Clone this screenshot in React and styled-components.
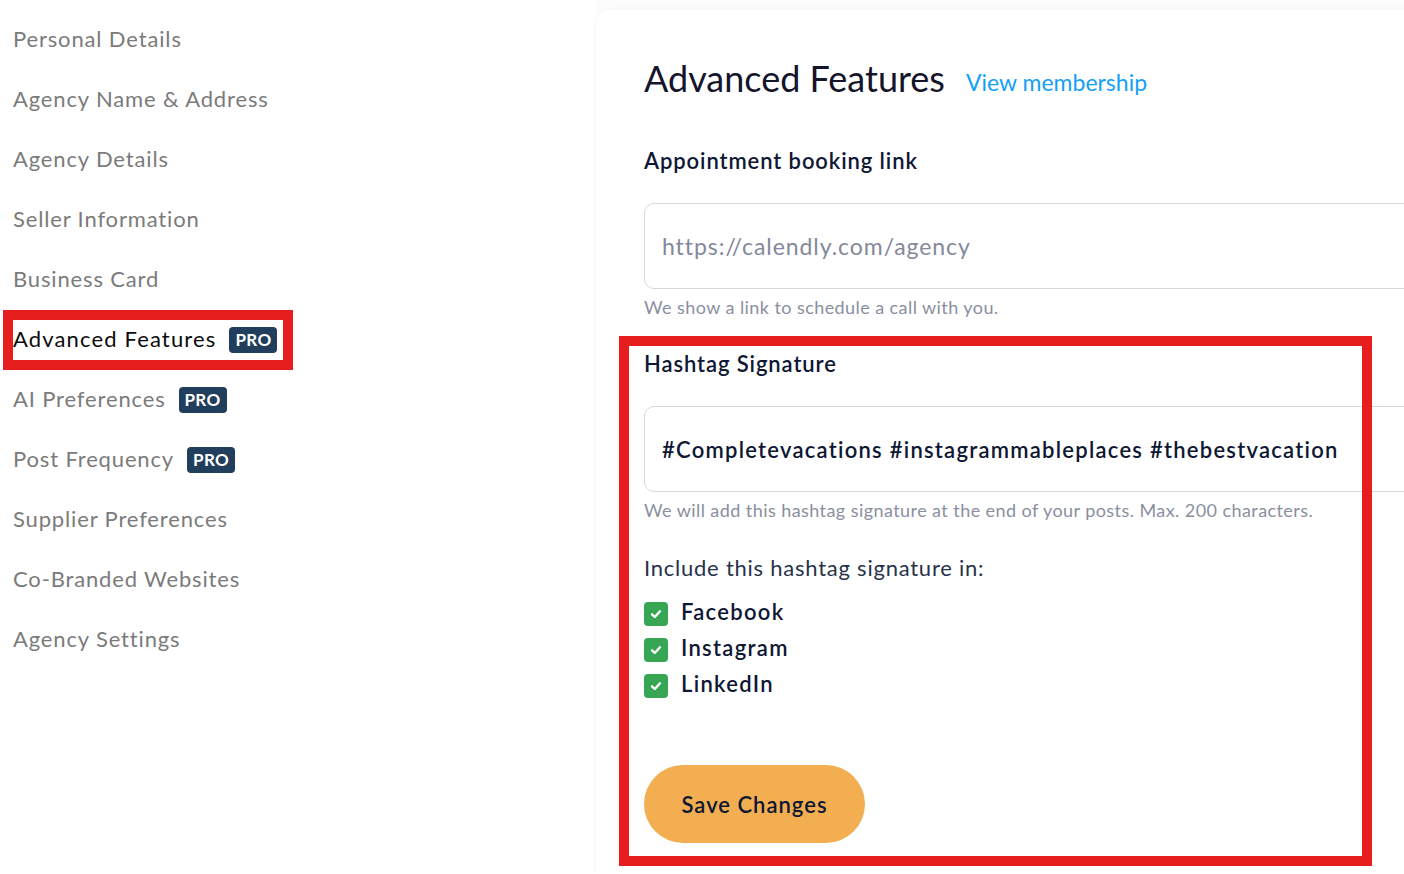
import React from "react";
import styled, { createGlobalStyle } from "styled-components";

const Global = createGlobalStyle`
  html, body { margin: 0; padding: 0; background: #ffffff; }
  body { font-family: "Lato", "Open Sans", sans-serif; overflow: hidden; }
  * { box-sizing: border-box; }
`;

const Page = styled.div`
  position: relative;
  display: flex;
  width: 1404px;
  height: 874px;
  overflow: hidden;
  background: #fcfcfc;
`;

const Sidebar = styled.nav`
  width: 596px;
  flex-shrink: 0;
  padding: 8px 0 0 13px;
  display: flex;
  flex-direction: column;
  background: #ffffff;
`;

const NavItem = styled.div`
  height: 60px;
  display: flex;
  align-items: center;
  gap: 13px;
  font-size: 22px;
  letter-spacing: ${(p) => (p.$active ? 1.15 : 0.85)}px;
  color: ${(p) => (p.$active ? "#0b0b0b" : "#7b7b7b")};
`;

const Badge = styled.span`
  display: inline-flex;
  align-items: center;
  justify-content: center;
  width: 48px;
  height: 26px;
  border-radius: 4px;
  background: #213f5c;
  color: #ffffff;
  font-size: 17px;
  font-weight: 700;
  letter-spacing: 0.3px;
  margin-top: 3px;
`;

const Card = styled.main`
  flex: 1;
  min-width: 860px;
  margin-top: 10px;
  background: #ffffff;
  border-radius: 14px 0 0 0;
  box-shadow: 0 0 6px rgba(0, 0, 0, 0.04);
  padding: 46px 0 0 49px;
  display: flex;
  flex-direction: column;
`;

const TitleRow = styled.div`
  display: flex;
  align-items: baseline;
  gap: 21px;
  height: 44px;
  margin-left: -1px;
  margin-bottom: 1px;
`;

const Title = styled.h1`
  margin: 0;
  font-size: 36px;
  font-weight: 400;
  line-height: 44px;
  color: #14142b;
`;

const Link = styled.a`
  font-size: 23px;
  color: #15a0f5;
  text-decoration: none;
  position: relative;
  top: -1px;
`;

const Label = styled.div`
  margin-top: ${(p) => p.$mt}px;
  margin-left: -1px;
  font-size: 22px;
  line-height: 28px;
  font-weight: ${(p) => (p.$regular ? 400 : 600)};
  letter-spacing: ${(p) => (p.$regular ? 0.76 : 0.9)}px;
  color: ${(p) => (p.$regular ? "#27324b" : "#0e1733")};
`;

const Input = styled.div`
  margin-top: 28px;
  margin-left: -1px;
  height: 86px;
  width: 820px;
  border: 1px solid #d4d8df;
  border-radius: 10px;
  display: flex;
  align-items: center;
  padding-left: 17px;
  white-space: nowrap;
  font-size: ${(p) => (p.$placeholder ? 23 : 22)}px;
  letter-spacing: ${(p) => (p.$placeholder ? 0.95 : 1.25)}px;
  color: ${(p) => (p.$placeholder ? "#83889b" : "#0e1733")};
  font-weight: ${(p) => (p.$placeholder ? 400 : 600)};
`;

const Help = styled.div`
  margin-top: 6px;
  margin-left: -1px;
  font-size: 18px;
  line-height: 24px;
  letter-spacing: 0.43px;
  color: #8a8fa0;
`;

const CheckList = styled.div`
  margin-top: 11px;
  margin-left: -1px;
  display: flex;
  flex-direction: column;
`;

const CheckRow = styled.label`
  height: 36px;
  display: flex;
  align-items: center;
  gap: 13px;
  font-size: 22px;
  font-weight: 600;
  letter-spacing: 1.3px;
  color: #0e1733;
`;

const Box = styled.span`
  width: 24px;
  height: 24px;
  border-radius: 4px;
  background: #37a654;
  display: inline-flex;
  align-items: center;
  justify-content: center;
  margin-top: 6px;
`;

const SaveButton = styled.button`
  margin-top: 64px;
  margin-left: -1px;
  width: 221px;
  height: 78px;
  border: none;
  border-radius: 39px;
  background: #f2ae50;
  color: #0e1733;
  font-family: inherit;
  font-size: 22px;
  font-weight: 600;
  letter-spacing: 1px;
  cursor: pointer;
`;

const Annotation = styled.div`
  position: absolute;
  left: ${(p) => p.$x}px;
  top: ${(p) => p.$y}px;
  width: ${(p) => p.$w}px;
  height: ${(p) => p.$h}px;
  border: 10px solid #e61e1e;
  pointer-events: none;
`;

const Check = () => (
  <svg width="14" height="14" viewBox="0 0 14 14">
    <path d="M3 7.3 L5.8 10 L11 4.3" fill="none" stroke="#fff" strokeWidth="2.4" strokeLinecap="round" strokeLinejoin="round" />
  </svg>
);

const nav = [
  ["Personal Details"],
  ["Agency Name & Address"],
  ["Agency Details"],
  ["Seller Information"],
  ["Business Card"],
  ["Advanced Features", true, true],
  ["AI Preferences", true],
  ["Post Frequency", true],
  ["Supplier Preferences"],
  ["Co-Branded Websites"],
  ["Agency Settings"],
];

export default function App() {
  return (
    <>
      <Global />
      <Page>
        <Sidebar>
          {nav.map(([t, pro, active]) => (
            <NavItem key={t} $active={active}>
              {t}
              {pro && <Badge>PRO</Badge>}
            </NavItem>
          ))}
        </Sidebar>
        <Card>
          <TitleRow>
            <Title>Advanced Features</Title>
            <Link href="#">View membership</Link>
          </TitleRow>
          <Label $mt={46}>Appointment booking link</Label>
          <Input $placeholder>https://calendly.com/agency</Input>
          <Help>We show a link to schedule a call with you.</Help>
          <Label $mt={31}>Hashtag Signature</Label>
          <Input>#Completevacations #instagrammableplaces #thebestvacation</Input>
          <Help>We will add this hashtag signature at the end of your posts. Max. 200 characters.</Help>
          <Label $mt={32} $regular>Include this hashtag signature in:</Label>
          <CheckList>
            {["Facebook", "Instagram", "LinkedIn"].map((s) => (
              <CheckRow key={s}>
                <Box><Check /></Box>
                {s}
              </CheckRow>
            ))}
          </CheckList>
          <div>
            <SaveButton>Save Changes</SaveButton>
          </div>
        </Card>
        <Annotation $x={3} $y={310} $w={290} $h={60} />
        <Annotation $x={619} $y={336} $w={753} $h={530} />
      </Page>
    </>
  );
}
